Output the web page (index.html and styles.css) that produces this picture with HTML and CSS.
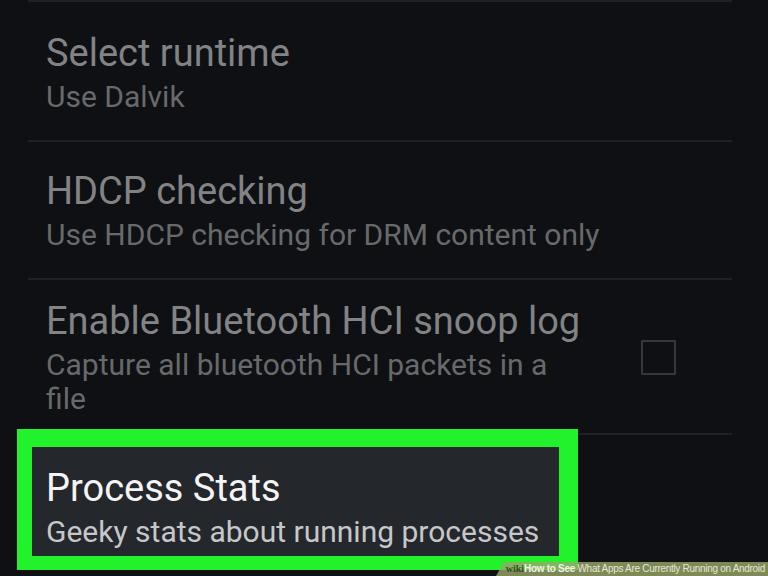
FILE: index.html
```html
<!DOCTYPE html>
<html lang="en">
<head>
<meta charset="utf-8">
<title>Developer options</title>
<link rel="stylesheet" href="styles.css">
</head>
<body>
<div class="screen">
  <div class="list">
    <div class="row row-first">
      <div class="title">Select runtime</div>
      <div class="summary">Use Dalvik</div>
    </div>
    <div class="row">
      <div class="title">HDCP checking</div>
      <div class="summary">Use HDCP checking for DRM content only</div>
    </div>
    <div class="row row-check">
      <div class="text">
        <div class="title nowrap">Enable Bluetooth HCI snoop log</div>
        <div class="summary">Capture all bluetooth HCI packets in a file</div>
      </div>
      <div class="checkbox"></div>
    </div>
    <div class="highlight">
      <div class="highlight-inner">
        <div class="title title-active">Process Stats</div>
        <div class="summary summary-active">Geeky stats about running processes</div>
      </div>
    </div>
  </div>
  <div class="watermark"><span class="wm-wiki">wiki</span><span class="wm-how">How to See</span> What Apps Are Currently Running on Android</div>
</div>
</body>
</html>
```

FILE: styles.css
```css
html, body {
  margin: 0;
  padding: 0;
  background: #0e1013;
}

.screen {
  position: relative;
  width: 768px;
  height: 576px;
  overflow: hidden;
  background: #0e1013;
  font-family: Roboto, "Noto Sans", sans-serif;
}

.list {
  margin-left: 28px;
  width: 704px;
  border-top: 2px solid #1f2125;
}

.row {
  padding: 27px 0 26px 18px;
  border-bottom: 2px solid #1f2125;
}

.row-first {
  padding-top: 29px;
}

.row-check {
  display: flex;
  align-items: center;
  padding-top: 19px;
  padding-bottom: 17px;
}

.text {
  width: 530px;
}

.title {
  font-size: 38px;
  line-height: 44px;
  color: #828385;
}

.nowrap {
  white-space: nowrap;
}

.summary {
  font-size: 30px;
  line-height: 34px;
  margin-top: 5px;
  color: #68696b;
}

.checkbox {
  width: 31px;
  height: 31px;
  margin-left: 65px;
  border: 2px solid #36373a;
  border-radius: 1px;
  flex: 0 0 auto;
}

.highlight {
  margin-left: -11px;
  margin-top: -6px;
  width: 527px;
  border-style: solid;
  border-color: #22f22b;
  border-width: 18px 19px 14px 15px;
  background: #24272c;
}

.highlight-inner {
  padding: 19px 0 7px 14px;
}

.title-active {
  color: #f4f4f4;
}

.summary-active {
  color: #c6c7c9;
}

.watermark {
  position: absolute;
  right: 0;
  bottom: 0;
  width: 272px;
  height: 14px;
  padding-right: 3px;
  box-sizing: border-box;
  background: rgba(150, 166, 104, 0.82);
  clip-path: polygon(8px 0, 100% 0, 100% 100%, 0 100%);
  font-family: "Liberation Sans", Arial, sans-serif;
  font-size: 10px;
  line-height: 14px;
  letter-spacing: -0.3px;
  text-align: right;
  white-space: nowrap;
  color: #e4e8d6;
}

.wm-wiki {
  font-family: "Liberation Serif", serif;
  font-weight: bold;
  color: #3a4620;
  letter-spacing: 0;
}

.wm-how {
  font-weight: bold;
  color: #f2f4ea;
}
```
